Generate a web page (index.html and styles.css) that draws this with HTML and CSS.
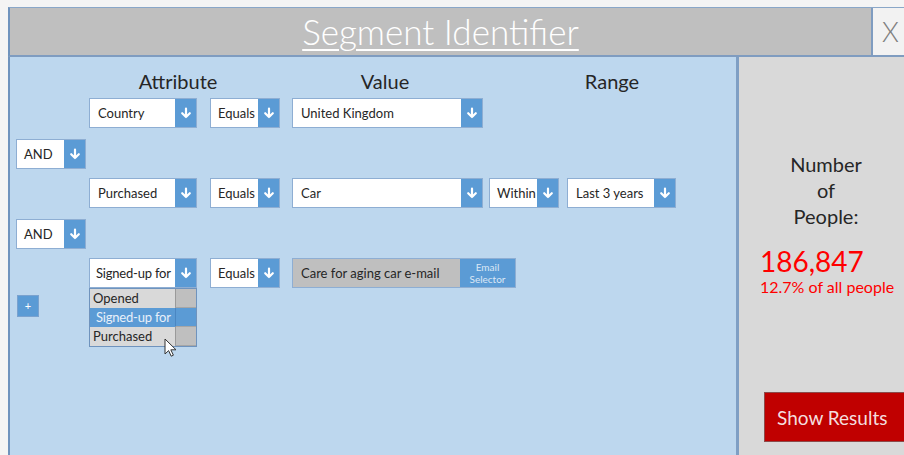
FILE: index.html
```html
<!DOCTYPE html>
<html lang="en">
<head>
    <meta charset="UTF-8">
    <meta name="viewport" content="width=device-width, initial-scale=1.0">
    <title>Segment Identifier</title>
    <link rel="stylesheet" href="styles.css">
</head>
<body>
    <div class="window">
        <div class="titlebar">
            <div class="title">Segment Identifier</div>
            <div class="close">X</div>
        </div>

        <div class="body">
            <div class="editor">
                <div class="headers">
                    <div class="col-attr">Attribute</div>
                    <div class="col-value">Value</div>
                    <div class="col-range">Range</div>
                </div>

                <!-- condition 1 -->
                <div class="condition">
                    <div class="select w-attr"><span class="text">Country</span><span class="arrow"><svg viewBox="0 0 12 12"><path d="M6 1.5v8.5M2.2 6.2L6 10l3.8-3.8"/></svg></span></div>
                    <div class="select w-op"><span class="text">Equals</span><span class="arrow"><svg viewBox="0 0 12 12"><path d="M6 1.5v8.5M2.2 6.2L6 10l3.8-3.8"/></svg></span></div>
                    <div class="select w-value"><span class="text">United Kingdom</span><span class="arrow"><svg viewBox="0 0 12 12"><path d="M6 1.5v8.5M2.2 6.2L6 10l3.8-3.8"/></svg></span></div>
                </div>

                <div class="joiner">
                    <div class="select w-op"><span class="text">AND</span><span class="arrow"><svg viewBox="0 0 12 12"><path d="M6 1.5v8.5M2.2 6.2L6 10l3.8-3.8"/></svg></span></div>
                </div>

                <!-- condition 2 -->
                <div class="condition">
                    <div class="select w-attr"><span class="text">Purchased</span><span class="arrow"><svg viewBox="0 0 12 12"><path d="M6 1.5v8.5M2.2 6.2L6 10l3.8-3.8"/></svg></span></div>
                    <div class="select w-op"><span class="text">Equals</span><span class="arrow"><svg viewBox="0 0 12 12"><path d="M6 1.5v8.5M2.2 6.2L6 10l3.8-3.8"/></svg></span></div>
                    <div class="select w-value"><span class="text">Car</span><span class="arrow"><svg viewBox="0 0 12 12"><path d="M6 1.5v8.5M2.2 6.2L6 10l3.8-3.8"/></svg></span></div>
                    <div class="select w-op range-op"><span class="text">Within</span><span class="arrow"><svg viewBox="0 0 12 12"><path d="M6 1.5v8.5M2.2 6.2L6 10l3.8-3.8"/></svg></span></div>
                    <div class="select w-range"><span class="text">Last 3 years</span><span class="arrow"><svg viewBox="0 0 12 12"><path d="M6 1.5v8.5M2.2 6.2L6 10l3.8-3.8"/></svg></span></div>
                </div>

                <div class="joiner">
                    <div class="select w-op"><span class="text">AND</span><span class="arrow"><svg viewBox="0 0 12 12"><path d="M6 1.5v8.5M2.2 6.2L6 10l3.8-3.8"/></svg></span></div>
                </div>

                <!-- condition 3 -->
                <div class="condition">
                    <div class="select w-attr open">
                        <span class="text">Signed-up for</span><span class="arrow"><svg viewBox="0 0 12 12"><path d="M6 1.5v8.5M2.2 6.2L6 10l3.8-3.8"/></svg></span>
                        <ul class="options">
                            <li><span class="label">Opened</span><span class="bar"></span></li>
                            <li class="selected"><span class="label">Signed-up for</span><span class="bar"></span></li>
                            <li><span class="label">Purchased</span><span class="bar"></span></li>
                        </ul>
                        <svg class="cursor" viewBox="0 0 12 19"><path d="M1 1v15l3.6-3.4 2.6 5.6 2.2-1-2.6-5.4H12z"/></svg>
                    </div>
                    <div class="select w-op"><span class="text">Equals</span><span class="arrow"><svg viewBox="0 0 12 12"><path d="M6 1.5v8.5M2.2 6.2L6 10l3.8-3.8"/></svg></span></div>
                    <div class="email">
                        <span class="email-name">Care for aging car e-mail</span>
                        <span class="email-btn">Email<br>Selector</span>
                    </div>
                </div>

                <div class="add">+</div>
            </div>

            <div class="summary">
                <div class="count-label">Number<br>of<br>People:</div>
                <div class="count">186,847</div>
                <div class="share">12.7% of all people</div>
                <button class="show">Show Results</button>
            </div>
        </div>
    </div>
</body>
</html>
```

FILE: styles.css
```css
body {
    margin: 0;
    background-color: #f4f4f4;
    font-family: Lato, "Open Sans", sans-serif;
    color: #262626;
    overflow: hidden;
}
.window {
    margin: 7px 0 0 8px;
    width: 920px;
    height: 448px;
    overflow: hidden;
}
.titlebar {
    display: flex;
    height: 47px;
    border-top: 1px solid #8aa7c8;
    border-left: 2px solid #6f93bd;
    border-bottom: 2px solid #7f9cc0;
    background-color: #bfbfbf;
}
.title {
    width: 861px;
    text-align: center;
    color: #fff;
    font-size: 35px;
    font-weight: 300;
    line-height: 47px;
    text-decoration: underline;
    text-decoration-thickness: 2px;
    text-underline-offset: 4px;
}
.close {
    flex: 1;
    background-color: #f2f2f2;
    border-left: 2px solid #7f9cc0;
    color: #7f7f7f;
    font-size: 27px;
    font-weight: 300;
    line-height: 47px;
    padding-left: 9px;
}
.body {
    display: flex;
    height: 400px;
}
.editor {
    width: 728px;
    flex-shrink: 0;
    background-color: #bdd7ee;
    border-left: 2px solid #6f93bd;
    padding-left: 6px;
    box-sizing: border-box;
}
.summary {
    flex: 1;
    background-color: #d9d9d9;
    border-left: 3px solid #7f9fc4;
    padding: 94px 0 0 21px;
}
.headers {
    display: flex;
    margin-left: 73px;
    height: 41px;
    font-size: 20px;
    line-height: 20px;
    padding-top: 14px;
    box-sizing: border-box;
}
.col-attr { width: 178px; text-align: center; }
.col-value { width: 236px; text-align: center; }
.col-range { width: 218px; text-align: center; }
.condition {
    display: flex;
    margin-left: 73px;
    height: 30px;
}
.joiner {
    margin: 11px 0 9px;
    height: 30px;
}
.select {
    position: relative;
    display: flex;
    height: 30px;
    box-sizing: border-box;
    border: 1px solid #8eaed3;
    background-color: #fff;
    font-size: 13px;
    margin-right: 13px;
}
.select .text {
    flex: 1;
    padding-left: 8px;
    line-height: 28px;
    white-space: nowrap;
    overflow: hidden;
}
.select .arrow {
    width: 21px;
    flex-shrink: 0;
    background-color: #5b9bd5;
    display: flex;
    align-items: center;
    justify-content: center;
}
.arrow svg {
    width: 12px;
    height: 12px;
    fill: none;
    stroke: #fff;
    stroke-width: 2.2;
    stroke-linecap: round;
    stroke-linejoin: round;
}
.w-attr { width: 108px; }
.w-op { width: 70px; }
.w-value { width: 191px; margin-right: 6px; }
.range-op { margin-right: 8px; }
.w-op .text { padding-left: 7px; }
.w-range { width: 109px; }
.open .text { padding-left: 6px; letter-spacing: -0.2px; }
.condition .w-op:nth-child(2) { margin-right: 12px; }
.email {
    display: flex;
    height: 30px;
    width: 224px;
    box-sizing: border-box;
    border: 1px solid #8eaed3;
}
.email-name {
    flex: 1;
    background-color: #bfbfbf;
    font-size: 13px;
    line-height: 28px;
    padding-left: 8px;
}
.email-btn {
    width: 55px;
    background-color: #5b9bd5;
    color: #dbe8f6;
    font-size: 10px;
    line-height: 12px;
    text-align: center;
    padding-top: 2px;
}
.options {
    position: absolute;
    top: 29px;
    left: -1px;
    width: 108px;
    margin: 0;
    padding: 0;
    list-style: none;
    border: 1px solid #6f93bd;
    box-sizing: border-box;
    background-color: #d9d9d9;
}
.options li {
    display: flex;
    height: 19px;
    line-height: 19px;
    font-size: 13px;
}
.options .label {
    flex: 1;
    padding-left: 3px;
    white-space: nowrap;
}
.options .bar {
    width: 20px;
    flex-shrink: 0;
    background-color: #bfbfbf;
    border-left: 1px solid #9a9a9a;
    border-bottom: 1px solid #a6a6a6;
}
.options li.selected {
    background-color: #5b9bd5;
    color: #e8f0fa;
}
.options li.selected .label { padding-left: 6px; letter-spacing: -0.2px; }
.options li.selected .bar {
    background-color: #5b9bd5;
    border-left-color: #4a86c2;
}
.cursor {
    position: absolute;
    top: 79px;
    left: 74px;
    width: 12px;
    height: 19px;
    fill: #fff;
    stroke: #333;
    stroke-width: 1;
}
.add {
    margin: 7px 0 0 1px;
    width: 22px;
    height: 22px;
    box-sizing: border-box;
    border: 1px solid #7aa2cf;
    background-color: #5b9bd5;
    color: #fff;
    font-size: 11px;
    line-height: 19px;
    text-align: center;
}
.count-label {
    font-size: 20px;
    line-height: 26px;
    text-align: center;
    width: 174px;
    margin-left: -21px;
}
.count {
    margin-top: 16px;
    color: #ff0000;
    font-size: 28px;
    line-height: 32px;
}
.share {
    color: #ff0000;
    font-size: 16px;
    line-height: 20px;
    white-space: nowrap;
}
.show {
    margin: 95px 0 0 4px;
    width: 160px;
    height: 50px;
    background-color: #c00000;
    border: 1px solid #8c4a4a;
    color: #f4dede;
    font-family: Lato, "Open Sans", sans-serif;
    font-size: 19px;
    text-align: left;
    padding-left: 12px;
}
```
